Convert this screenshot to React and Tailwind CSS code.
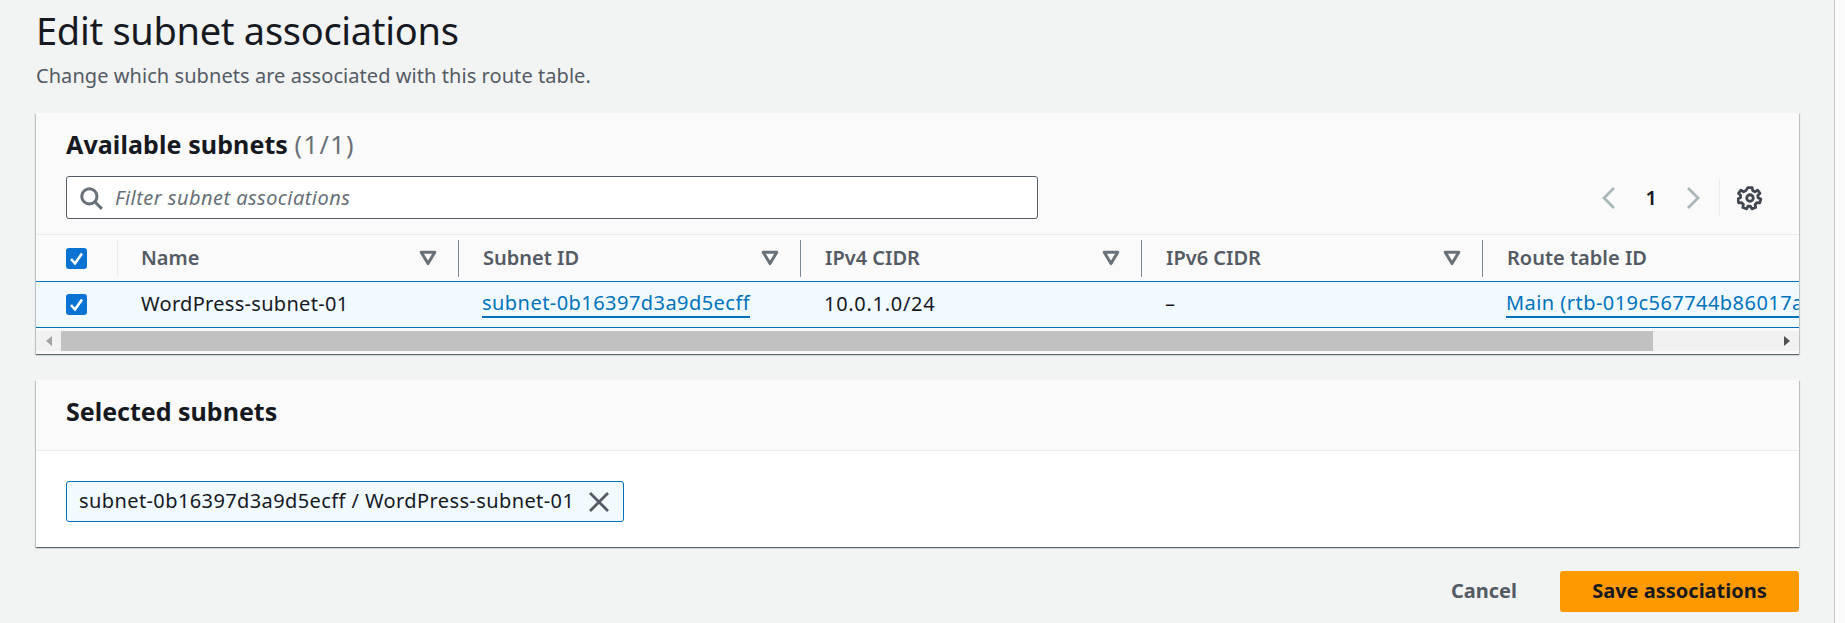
const FONT = "font-['Noto_Sans','Open_Sans',sans-serif]";

function Box() {
  return (
    <svg width="21" height="21" viewBox="0 0 21 21" className="shrink-0">
      <rect width="21" height="21" rx="3" fill="#0972d3" />
      <path d="M5 11 L9 15.5 L16 5.5" fill="none" stroke="#fff" strokeWidth="2.6" />
    </svg>
  );
}

function Tri() {
  return (
    <svg width="18" height="16" viewBox="0 0 18 16" className="shrink-0">
      <path d="M2.2 2.2 H15.8 L9 13.6 Z" fill="none" stroke="#687078" strokeWidth="3" strokeLinejoin="round" />
    </svg>
  );
}

function Head({ label, w, last }) {
  return (
    <div className={`flex h-[37px] shrink-0 items-center justify-between border-l border-[#7d8998] pl-[24px] ${w}`}>
      <span className="text-[20px] font-semibold whitespace-nowrap text-[#545b64]">{label}</span>
      {!last && <span className="mr-[21px] flex"><Tri /></span>}
    </div>
  );
}

function Link({ children }) {
  return <span className="border-b-2 border-[#0073bb] whitespace-nowrap text-[#0073bb] leading-[26px] tracking-[0.45px]">{children}</span>;
}

function Cell({ w, children }) {
  return <div className={`flex shrink-0 items-center pb-[2px] pl-[24px] whitespace-nowrap ${w}`}>{children}</div>;
}

export default function App() {
  return (
    <div className={`h-[623px] overflow-hidden bg-[#fbfbfb] ${FONT} text-[20px] text-[#16191f]`}>
      <div className="h-full w-[1835px] border-r border-[#c4c8cc] bg-[#f2f3f3] pr-[35px] pl-[36px]">
        <h1 className="pt-[5px] text-[38px] leading-[50px] font-normal tracking-[-0.3px]">Edit subnet associations</h1>
        <p className="mt-[8px] text-[20px] leading-[25px] tracking-[0.06px] text-[#545b64]">Change which subnets are associated with this route table.</p>

        <section className="mt-[25px] h-[241px] overflow-hidden bg-[#fafafa] shadow-[0_1px_1px_0_rgba(0,28,36,0.5),1px_1px_1px_0_rgba(0,28,36,0.15),-1px_1px_1px_0_rgba(0,28,36,0.15)]">
          <div className="h-[122px] border-b border-[#eaeded] px-[30px] pt-[16px]">
            <h2 className="text-[25px] leading-[30px] font-bold tracking-[0.1px]">
              Available subnets <span className="font-normal tracking-[1.5px] text-[#687078]">(1/1)</span>
            </h2>
            <div className="mt-[17px] flex items-center justify-between">
              <div className="flex h-[43px] w-[972px] items-center rounded-[3px] border border-[#545b64] bg-white pl-[11px]">
                <svg width="26" height="26" viewBox="0 0 24 24" fill="none" stroke="#687078" strokeWidth="2.8" className="shrink-0">
                  <circle cx="10.5" cy="10.5" r="7" />
                  <path d="M15.5 15.5 L22 22" />
                </svg>
                <span className="ml-[11px] tracking-[0.45px] text-[#687078] italic">Filter subnet associations</span>
              </div>
              <div className="flex items-center">
                <svg width="20" height="26" viewBox="0 0 20 26" fill="none" stroke="#aab7b8" strokeWidth="2.8" className="shrink-0">
                  <path d="M15 3 L5 13 L15 23" />
                </svg>
                <span className="ml-[27px] mr-[26px] font-semibold">1</span>
                <svg width="20" height="26" viewBox="0 0 20 26" fill="none" stroke="#aab7b8" strokeWidth="2.8" className="shrink-0">
                  <path d="M5 3 L15 13 L5 23" />
                </svg>
                <div className="ml-[16px] mr-[17px] h-[37px] w-px bg-[#eaeded]" />
                <svg width="26" height="26" viewBox="0 0 24 24" fill="none" stroke="#414750" strokeWidth="2.6" strokeLinejoin="round" className="mr-[6px] shrink-0">
                  <path d="M10 2.5h4l.6 2.8 2 .9 2.4-1.5 2.2 2.9-2 2 .3 2.2 2.5 1.2-1 3.5-2.8-.1-1.5 1.6.5 2.8-3.4 1.2-1.4-2.4h-2.2l-1.4 2.4-3.4-1.2.5-2.8-1.5-1.6-2.8.1-1-3.5 2.5-1.2.3-2.2-2-2 2.2-2.9 2.4 1.5 2-.9z" />
                  <circle cx="12" cy="12" r="3" />
                </svg>
              </div>
            </div>
          </div>

          <div className="flex h-[46px] items-center overflow-hidden">
            <div className="flex w-[82px] shrink-0 items-center justify-between pl-[30px]">
              <Box />
              <div className="h-[37px] w-px bg-[#eaeded]" />
            </div>
            <div className="flex h-[37px] w-[340px] shrink-0 items-center justify-between pl-[23px]">
              <span className="font-semibold text-[#545b64]">Name</span>
              <span className="mr-[21px] flex"><Tri /></span>
            </div>
            <Head label="Subnet ID" w="w-[342px]" />
            <Head label="IPv4 CIDR" w="w-[341px]" />
            <Head label="IPv6 CIDR" w="w-[341px]" />
            <Head label="Route table ID" w="w-[341px]" last />
          </div>

          <div className="flex h-[47px] items-center overflow-hidden border-y border-[#0073bb] bg-[#f1faff]">
            <div className="flex w-[82px] shrink-0 pl-[30px]"><Box /></div>
            <div className="flex w-[340px] shrink-0 pb-[2px] pl-[23px] tracking-[0.3px]">WordPress-subnet-01</div>
            <Cell w="w-[342px]"><Link>subnet-0b16397d3a9d5ecff</Link></Cell>
            <Cell w="w-[341px]"><span className="tracking-[0.7px]">10.0.1.0/24</span></Cell>
            <Cell w="w-[341px]">–</Cell>
            <Cell w="w-[400px]"><Link>Main (rtb-019c567744b86017a)</Link></Cell>
          </div>

          <div className="mt-[3px] flex h-[20px] items-stretch bg-[#f1f1f1]">
            <div className="flex w-[25px] shrink-0 items-center justify-center">
              <svg width="6" height="10" viewBox="0 0 6 10"><path d="M6 0 V10 L0 5 Z" fill="#a3a3a3" /></svg>
            </div>
            <div className="w-[1592px] shrink-0 bg-[#c1c1c1]" />
            <div className="flex flex-1 items-center justify-end pr-[9px]">
              <svg width="6" height="10" viewBox="0 0 6 10"><path d="M0 0 V10 L6 5 Z" fill="#505050" /></svg>
            </div>
          </div>
        </section>

        <section className="mt-[26px] h-[167px] overflow-hidden bg-white shadow-[0_1px_1px_0_rgba(0,28,36,0.5),1px_1px_1px_0_rgba(0,28,36,0.15),-1px_1px_1px_0_rgba(0,28,36,0.15)]">
          <div className="h-[71px] border-b border-[#eaeded] bg-[#fafafa] px-[30px] pt-[16px]">
            <h2 className="text-[25px] leading-[30px] font-bold">Selected subnets</h2>
          </div>
          <div className="px-[30px] pt-[30px]">
            <div className="flex h-[41px] w-[558px] items-center justify-between rounded-[3px] border border-[#0073bb] bg-[#f1faff] pr-[12px] pl-[12px]">
              <span className="pb-[2px] tracking-[0.4px] whitespace-nowrap">subnet-0b16397d3a9d5ecff / WordPress-subnet-01</span>
              <svg width="24" height="24" viewBox="0 0 24 24" fill="none" stroke="#545b64" strokeWidth="2.8" className="shrink-0">
                <path d="M3 3 L21 21 M21 3 L3 21" />
              </svg>
            </div>
          </div>
        </section>

        <div className="mt-[24px] flex items-center justify-end gap-[43px]">
          <span className="pb-[2px] font-bold text-[#545b64]">Cancel</span>
          <button className="flex h-[41px] w-[239px] items-center justify-center rounded-[3px] bg-[#ff9900] pb-[2px] font-bold text-[#16191f]">
            Save associations
          </button>
        </div>
      </div>
    </div>
  );
}
